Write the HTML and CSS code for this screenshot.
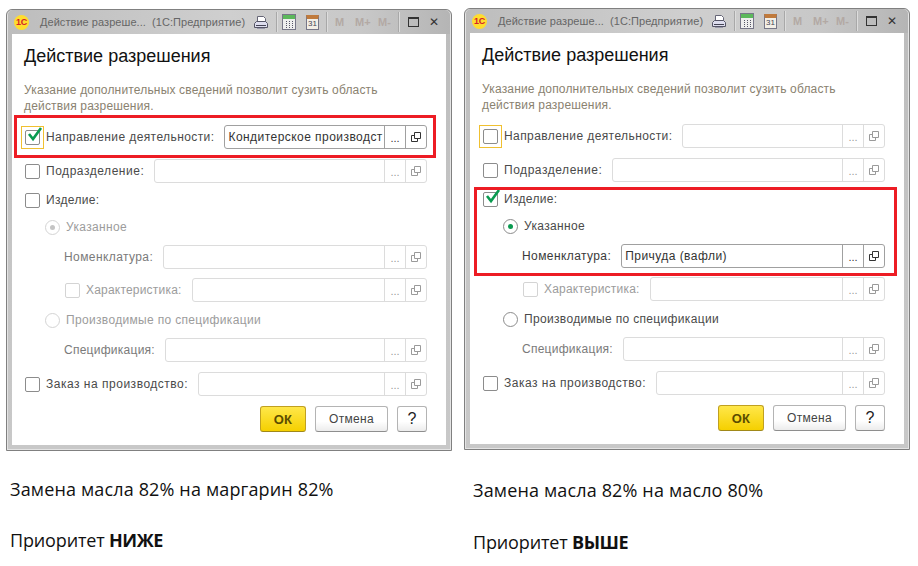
FILE: index.html
```html
<!DOCTYPE html>
<html lang="ru">
<head>
<meta charset="utf-8">
<title>Действие разрешения</title>
<link rel="stylesheet" href="styles.css">
</head>
<body>
<svg class="defs" width="0" height="0" aria-hidden="true">
  <symbol id="open" viewBox="0 0 12 12"><path d="M4.5 1.5h6v6h-6z M4.5 4.5h-3v6h6v-3" fill="none" stroke="currentColor"/></symbol>
  <symbol id="print" viewBox="0 0 16 15"><path d="M4.5 1.5h6l2 2v4h-8z" fill="#fff" stroke="#667"/><path d="M1.5 8.5l2-2h9l2 2v4h-13z" fill="#dde" stroke="#556"/><path d="M3 10.5h10" stroke="#445"/><path d="M4 13.5h8" stroke="#99a"/></symbol>
  <symbol id="calc" viewBox="0 0 14 16"><rect x=".5" y=".5" width="13" height="15" fill="#eee" stroke="#778"/><rect x="1" y="1" width="12" height="4" fill="#5cb85c"/><path d="M4 7h1v1H4zM7 7h1v1H7zM10 7h1v1h-1zM4 9h1v1H4zM7 9h1v1H7zM10 9h1v1h-1zM4 11h1v1H4zM7 11h1v1H7zM10 11h1v1h-1zM4 13h1v1H4zM7 13h1v1H7zM10 13h1v1h-1z" fill="#556"/></symbol>
</svg>

<main class="stage">
  <section class="col col-left">
    <div class="win">
      <header class="bar">
        <span class="logo">1С</span>
        <span class="bar-title">Действие разреше...&nbsp; (1С:Предприятие)</span>
        <svg class="ic-print"><use href="#print"/></svg>
        <i class="sep sep-a"></i>
        <svg class="ic-calc"><use href="#calc"/></svg>
        <span class="ic-cal">31</span>
        <i class="sep sep-b"></i>
        <span class="mem">M</span><span class="mem">M+</span><span class="mem">M-</span>
        <i class="sep sep-c"></i>
        <span class="ic-max"></span>
        <span class="ic-close">✕</span>
      </header>
      <div class="body">
        <h1 class="h">Действие разрешения</h1>
        <p class="desc">Указание дополнительных сведений позволит сузить область действия разрешения.</p>
        <div class="row m-first">
          <span class="focus"><span class="cb on"><svg class="tick" viewBox="0 0 18 16"><path d="M3 8l4 5 8-11" fill="none" stroke="#0a9a50" stroke-width="2.6"/></svg></span></span>
          <span class="lb ls-napr">Направление деятельности:</span>
          <span class="field on"><span class="val">Кондитерское производст</span><span class="dots">...</span><span class="op"><svg><use href="#open"/></svg></span></span>
        </div>
        <div class="row m-10"><span class="cb"></span><span class="lb ls-pod">Подразделение:</span><span class="field"><span class="val"></span><span class="dots">...</span><span class="op"><svg><use href="#open"/></svg></span></span></div>
        <div class="row m-5"><span class="cb"></span><span class="lb">Изделие:</span></div>
        <div class="row m-3 ind1"><span class="rd off dot"></span><span class="lb off-t">Указанное</span></div>
        <div class="row m-6 ind2"><span class="lb lb-n mid-t ls-nom">Номенклатура:</span><span class="field"><span class="val"></span><span class="dots">...</span><span class="op"><svg><use href="#open"/></svg></span></span></div>
        <div class="row m-9 ind2b"><span class="cb off"></span><span class="lb off-t ls-har">Характеристика:</span><span class="field"><span class="val"></span><span class="dots">...</span><span class="op"><svg><use href="#open"/></svg></span></span></div>
        <div class="row m-6 ind1"><span class="rd off"></span><span class="lb off-t">Производимые по спецификации</span></div>
        <div class="row m-6 ind2"><span class="lb lb-n mid-t ls-spec">Спецификация:</span><span class="field"><span class="val"></span><span class="dots">...</span><span class="op"><svg><use href="#open"/></svg></span></span></div>
        <div class="row m-10"><span class="cb"></span><span class="lb ls-zak">Заказ на производство:</span><span class="field"><span class="val"></span><span class="dots">...</span><span class="op"><svg><use href="#open"/></svg></span></span></div>
        <div class="btns"><button class="btn ok">ОК</button><button class="btn cancel">Отмена</button><button class="btn help">?</button></div>
      </div>
      <div class="mark mark-l"></div>
    </div>
    <p class="cap cap-1">Замена масла 82% на маргарин 82%</p>
    <p class="cap cap-2">Приоритет <b>НИЖЕ</b></p>
  </section>

  <section class="col col-right">
    <div class="win">
      <header class="bar">
        <span class="logo">1С</span>
        <span class="bar-title">Действие разреше...&nbsp; (1С:Предприятие)</span>
        <svg class="ic-print"><use href="#print"/></svg>
        <i class="sep sep-a"></i>
        <svg class="ic-calc"><use href="#calc"/></svg>
        <span class="ic-cal">31</span>
        <i class="sep sep-b"></i>
        <span class="mem">M</span><span class="mem">M+</span><span class="mem">M-</span>
        <i class="sep sep-c"></i>
        <span class="ic-max"></span>
        <span class="ic-close">✕</span>
      </header>
      <div class="body">
        <h1 class="h">Действие разрешения</h1>
        <p class="desc">Указание дополнительных сведений позволит сузить область действия разрешения.</p>
        <div class="row m-first">
          <span class="focus"><span class="cb"></span></span>
          <span class="lb ls-napr">Направление деятельности:</span>
          <span class="field"><span class="val"></span><span class="dots">...</span><span class="op"><svg><use href="#open"/></svg></span></span>
        </div>
        <div class="row m-10"><span class="cb"></span><span class="lb ls-pod">Подразделение:</span><span class="field"><span class="val"></span><span class="dots">...</span><span class="op"><svg><use href="#open"/></svg></span></span></div>
        <div class="row m-5"><span class="cb on"><svg class="tick" viewBox="0 0 18 16"><path d="M3 8l4 5 8-11" fill="none" stroke="#0a9a50" stroke-width="2.6"/></svg></span><span class="lb">Изделие:</span></div>
        <div class="row m-3 ind1"><span class="rd dot dot-on"></span><span class="lb">Указанное</span></div>
        <div class="row m-6 ind2"><span class="lb lb-n dark-t ls-nom">Номенклатура:</span><span class="field on"><span class="val">Причуда (вафли)</span><span class="dots">...</span><span class="op"><svg><use href="#open"/></svg></span></span></div>
        <div class="row m-9 ind2b"><span class="cb off"></span><span class="lb off-t ls-har">Характеристика:</span><span class="field"><span class="val"></span><span class="dots">...</span><span class="op"><svg><use href="#open"/></svg></span></span></div>
        <div class="row m-6 ind1"><span class="rd"></span><span class="lb">Производимые по спецификации</span></div>
        <div class="row m-6 ind2"><span class="lb lb-n mid-t ls-spec">Спецификация:</span><span class="field"><span class="val"></span><span class="dots">...</span><span class="op"><svg><use href="#open"/></svg></span></span></div>
        <div class="row m-10"><span class="cb"></span><span class="lb ls-zak">Заказ на производство:</span><span class="field"><span class="val"></span><span class="dots">...</span><span class="op"><svg><use href="#open"/></svg></span></span></div>
        <div class="btns"><button class="btn ok">ОК</button><button class="btn cancel">Отмена</button><button class="btn help">?</button></div>
      </div>
      <div class="mark mark-r"></div>
    </div>
    <p class="cap cap-1b">Замена масла 82% на масло 80%</p>
    <p class="cap cap-2b">Приоритет <b>ВЫШЕ</b></p>
  </section>
</main>
</body>
</html>
```
FILE: styles.css
```css
* { box-sizing: border-box; }
html, body { margin: 0; padding: 0; background: #fff; }
body { width: 918px; height: 566px; overflow: hidden; font-family: "Liberation Sans", Arial, sans-serif; }
.defs { position: absolute; }

.stage { display: flex; gap: 12px; padding: 8px 0 0 6px; }
.col { width: 446px; }
.col-left { margin-top: 1px; }

.win {
  position: relative;
  width: 446px; height: 442px;
  border: 1px solid #808080;
  border-radius: 6px 6px 0 0;
  padding: 0 5px 5px;
  background: linear-gradient(180deg, #cfcfcf 0, #bdbdbd 24px, #c6c6c6 60%, #c8c8c8 100%);
  box-shadow: inset 0 0 0 1px #e4e4e4;
}

.bar { height: 24px; display: flex; align-items: center; color: #666; background: linear-gradient(90deg, #bdbdbd 0, #cfcfcf 50%, #c8c8c8 80%, #b5b5b5 100%); margin: 0 -4px; padding-left: 6px; border-radius: 5px 5px 0 0; }
.logo { width: 15px; height: 15px; border-radius: 50%; background: #ffdd2e; color: #d3202a; font-size: 9px; font-weight: 700; line-height: 15px; text-align: center; flex: none; letter-spacing: -.3px; }
.bar-title { width: 213px; margin-left: 11px; font-size: 11px; white-space: nowrap; letter-spacing: .05px; flex: none; }
.ic-print { width: 16px; height: 15px; flex: none; }
.sep { width: 1px; height: 20px; background: #a8a8a8; border-right: 1px solid #ddd; flex: none; box-sizing: content-box; }
.sep-a { margin: 0 4px 0 7px; }
.ic-calc { width: 14px; height: 16px; flex: none; }
.ic-cal { width: 13px; height: 15px; margin-left: 10px; flex: none; border: 1px solid #778; border-top: 4px solid #c07a3c; background: #f3efe6; font-size: 8px; line-height: 10px; text-align: center; color: #445; }
.sep-b { margin: 0 7px 0 7px; }
.mem { width: 20px; font-size: 11px; font-weight: 700; color: #b3a9a4; flex: none; }
.mem + .mem { width: 23px; }
.sep-c { margin: 0 6px 0 -3px; }
.ic-max { width: 11px; height: 10px; border: 1px solid #333; border-top-width: 2px; flex: none; margin-left: 2px; }
.ic-close { width: 12px; margin-left: 10px; font-size: 12px; line-height: 12px; font-weight: 700; color: #333; flex: none; font-family: "DejaVu Sans", sans-serif; }

.body { background: #fff; height: 411px; padding: 0 19px 0 13px; overflow: hidden; }
.h { margin: 0; padding-top: 11px; height: 44px; font-weight: 400; font-size: 18px; line-height: 22px; color: #111; margin-left: -1px; }
.desc { margin: 0 0 0 -1px; padding-top: 4px; width: 395px; font-size: 12px; line-height: 16px; color: #8a8270; letter-spacing: .17px; }

.row { display: flex; align-items: center; height: 24px; }
.m-first { margin-top: 11px; }
.m-3 { margin-top: 3px; }
.m-5 { margin-top: 5px; }
.m-6 { margin-top: 6px; }
.m-9 { margin-top: 9px; }
.m-10 { margin-top: 10px; }
.ind1 { padding-left: 20px; }
.ind2 { padding-left: 39px; }
.ind2b { padding-left: 40px; }

.cb { position: relative; flex: none; width: 15px; height: 15px; border: 1px solid #8c8c8c; border-radius: 2px; background: #fff; }
.cb.off { border-color: #d4d4d4; }
.tick { position: absolute; left: 0; top: -5px; width: 18px; height: 16px; }
.focus { flex: none; width: 23px; height: 23px; margin: 0 -4px; border: 1px solid #f0c030; display: flex; align-items: center; justify-content: center; }

.rd { flex: none; width: 15px; height: 15px; border-radius: 50%; border: 1px solid #8c8c8c; background: #fff; position: relative; }
.rd.off { border-color: #d4d4d4; }
.dot::after { content: ""; position: absolute; left: 4px; top: 4px; width: 5px; height: 5px; border-radius: 50%; background: #c4c4c4; }
.dot-on::after { background: #0a9a50; }

.lb { flex: none; margin-left: 6px; font-size: 12px; color: #4a4a4a; letter-spacing: .33px; white-space: nowrap; }
.lb-n { margin-left: 0; }
.ls-napr { letter-spacing: .41px; }
.ls-pod { letter-spacing: .54px; }
.ls-nom { letter-spacing: .41px; }
.ls-har { letter-spacing: .2px; }
.ls-spec { letter-spacing: .26px; }
.ls-zak { letter-spacing: .51px; }
.off-t { color: #9c9c9c; }
.mid-t { color: #7a7a7a; }
.dark-t { color: #3a3a3a; }

.field { flex: 1; margin-left: 10px; height: 24px; display: flex; border: 1px solid #dcdcdc; border-radius: 3px; background: #fff; color: #9a9a9a; }
.field.on { border-color: #a0a0a0; color: #333; }
.val { flex: 1; min-width: 0; overflow: hidden; padding-left: 3px; font-size: 12px; line-height: 22px; letter-spacing: .45px; color: #333; white-space: nowrap; }
.dots { flex: none; width: 21px; border-left: 1px solid #dcdcdc; font-size: 11px; line-height: 24px; text-align: center; color: inherit; }
.op { flex: none; width: 21px; border-left: 1px solid #dcdcdc; display: flex; align-items: center; justify-content: center; }
.on .dots, .on .op { border-left-color: #a0a0a0; }
.op svg { width: 12px; height: 12px; display: block; }

.btns { display: flex; justify-content: flex-end; gap: 9px; margin-top: 10px; }
.btn { height: 26px; padding: 0; border: 1px solid #b4b4b4; border-bottom-color: #8e8e8e; border-radius: 3px; background: linear-gradient(180deg, #fff 0, #fff 60%, #ececec 100%); font-family: inherit; font-size: 12px; color: #444; letter-spacing: .3px; }
.ok { width: 46px; border-color: #c0a020; border-bottom-color: #a08818; background: linear-gradient(180deg, #ffe74a 0, #f5d000 100%); font-size: 13px; font-weight: 700; color: #5b4d00; }
.cancel { width: 73px; }
.help { width: 30px; font-size: 16px; font-weight: 400; color: #222; }

.mark { position: absolute; border: 3px solid #ed1c24; }
.mark-l { left: 7px; top: 105px; width: 422px; height: 43px; }
.mark-r { left: 9px; top: 178px; width: 423px; height: 89px; }

.cap { margin: 0; font-family: "Open Sans", sans-serif; font-size: 18px; line-height: 24px; color: #111; letter-spacing: .15px; }
.cap b { font-weight: 700; letter-spacing: -.5px; }
.cap-1 { margin: 26px 0 0 4px; }
.cap-2 { margin: 27px 0 0 4px; letter-spacing: -.15px; }
.cap-1b { margin: 28px 0 0 9px; }
.cap-2b { margin: 28px 0 0 9px; letter-spacing: -.15px; }
```
